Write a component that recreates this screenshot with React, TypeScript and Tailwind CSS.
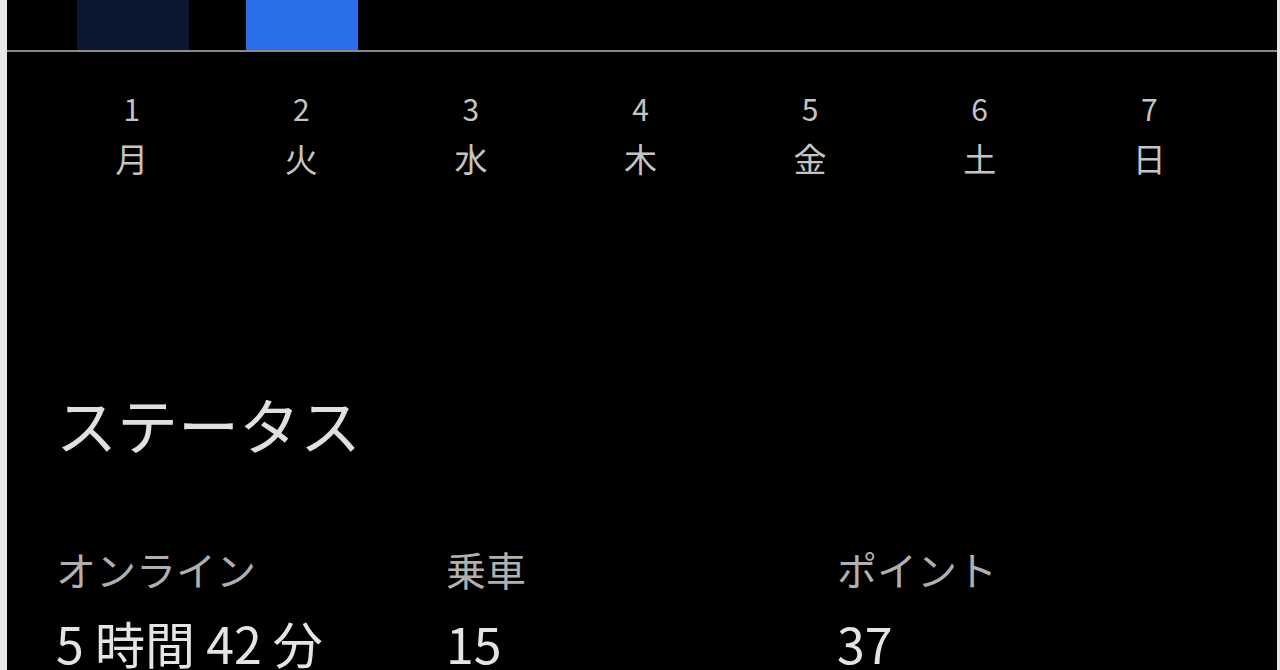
const days = [
  { num: '1', label: '月', bar: 'bg-[#0b1630]' },
  { num: '2', label: '火', bar: 'bg-[#2a6ee9]' },
  { num: '3', label: '水', bar: '' },
  { num: '4', label: '木', bar: '' },
  { num: '5', label: '金', bar: '' },
  { num: '6', label: '土', bar: '' },
  { num: '7', label: '日', bar: '' },
]

const stats = [
  { label: 'オンライン', value: '5 時間 42 分' },
  { label: '乗車', value: '15' },
  { label: 'ポイント', value: '37' },
]

const App = () => {
  return (
    <div
      className="flex h-[670px] w-[1280px] overflow-hidden bg-[#e6e6e6]"
      style={{ fontFamily: '"Noto Sans CJK JP", "Noto Sans", sans-serif' }}
    >
      <div className="ml-[7px] mr-[3px] flex-1 bg-black">
        {/* bar chart bottom */}
        <div className="grid h-[50px] grid-cols-7 pl-[41px] pr-[42px]">
          {days.map((d) => (
            <div key={d.num} className="flex justify-center">
              {d.bar && <div className={`h-full w-[112px] ${d.bar}`} />}
            </div>
          ))}
        </div>
        <div className="h-[2px] bg-[#8a8a8a]" />

        {/* day labels */}
        <div className="grid grid-cols-7 pl-[40px] pr-[43px] pt-[38px] text-[#c4c4c4]">
          {days.map((d) => (
            <div key={d.num} className="flex flex-col items-center">
              <span className="text-[30px] leading-[36px]">{d.num}</span>
              <span className="mt-[10px] text-[33px] leading-[44px]">{d.label}</span>
            </div>
          ))}
        </div>

        {/* status */}
        <div className="pl-[49px]">
          <h2 className="mt-[208px] text-[61px] leading-[72px] text-[#e0e0e0]">ステータス</h2>
          <div className="mt-[85px] grid grid-cols-[390px_391px_1fr]">
            {stats.map((s) => (
              <div key={s.label} className="flex flex-col">
                <span className="text-[40px] leading-[48px] text-[#b0b0b0]">{s.label}</span>
                <span className="mt-[20px] text-[50px] leading-[58px] text-[#e4e4e4] whitespace-nowrap">
                  {s.value}
                </span>
              </div>
            ))}
          </div>
        </div>
      </div>
    </div>
  )
}

export default App
